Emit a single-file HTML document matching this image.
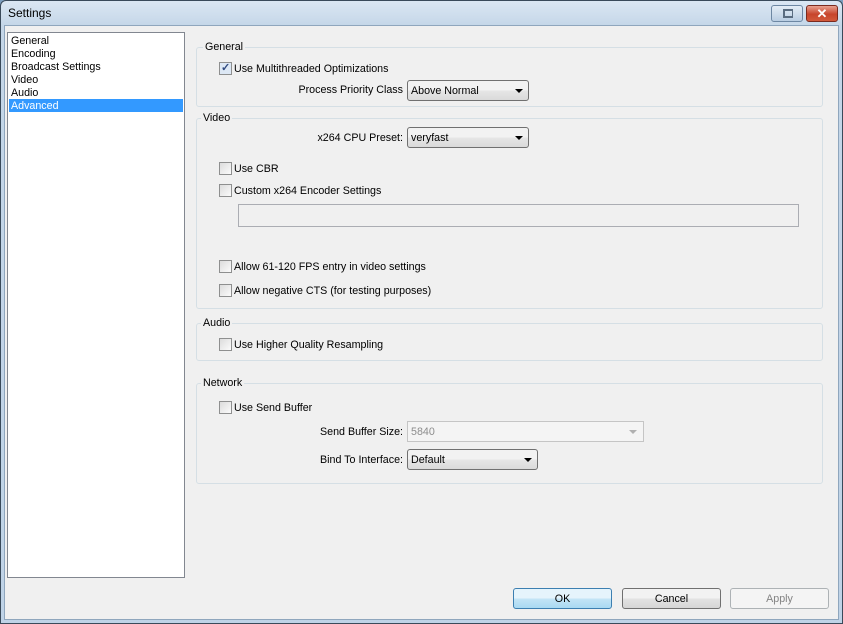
<!DOCTYPE html>
<html><head><style>
*{margin:0;padding:0;box-sizing:border-box}
body{width:843px;height:624px;overflow:hidden;background:#7d9fc0;font-family:"Liberation Sans",sans-serif;font-size:10.7px;color:#000;position:relative}
.a{position:absolute}
#frame{left:0;top:0;width:843px;height:624px;background:linear-gradient(#dbe7f3,#c4d6e8 25px,#bfd3e7);border:1px solid #3a4a5a;border-radius:6px 6px 0 0}
#client{left:4px;top:25px;width:835px;height:595px;background:#f0f0f0;border:1px solid #8fa6bd}
.title{left:8px;top:6px;font-size:12px}
.grp{position:absolute;border:1px solid #d5dfe5;border-radius:3px}
.lbl{position:absolute;background:#f0f0f0;padding:0 2px}
.cb{position:absolute;width:13px;height:13px;border:1px solid #8e8f8f;background:linear-gradient(135deg,#dcdcdc,#fbfbfb)}
.combo{position:absolute;height:21px;border:1px solid #707070;border-radius:3px;background:linear-gradient(#f2f2f2 50%,#e6e6e6 50%,#dadada);padding:0 3px;line-height:20px}
.combo:after{content:"";position:absolute;right:5px;top:8px;border-left:4px solid transparent;border-right:4px solid transparent;border-top:4px solid #000}
.btn{position:absolute;height:21px;border:1px solid #707070;border-radius:3px;background:linear-gradient(#f2f2f2 50%,#e3e3e3 50%,#d6d6d6);text-align:center;line-height:21px}
.r{position:absolute;text-align:right;width:200px}
</style></head><body>
<div id="frame" class="a"></div>
<div class="a title">Settings</div>
<div class="a" style="left:771px;top:5px;width:32px;height:17px;border:1px solid #6d87a3;border-radius:3px;background:linear-gradient(#e4edf6,#b9cde2)"><div class="a" style="left:11px;top:3px;width:10px;height:9px;border:2px solid #5a6c80;border-right-width:1px"></div></div>
<div class="a" style="left:806px;top:5px;width:32px;height:17px;border:1px solid #7a2a1e;border-radius:3px;background:linear-gradient(#e8a08f,#c7452c 55%,#d25a3b);color:#fff;font-weight:bold;text-align:center;line-height:15px;font-size:13px">✕</div>
<div id="client" class="a"></div>
<div class="a" style="left:7px;top:32px;width:178px;height:546px;background:#fff;border:1px solid #828790"></div>
<div class="a" style="left:11px;top:35px;line-height:13px">General<br>Encoding<br>Broadcast Settings<br>Video<br>Audio</div>
<div class="a" style="left:9px;top:99px;width:174px;height:13px;background:#3399ff;color:#fff;padding-left:2px;line-height:14px">Advanced</div>

<div class="grp" style="left:196px;top:47px;width:627px;height:60px"></div>
<div class="lbl" style="left:203px;top:41px">General</div>
<div class="cb" style="left:219px;top:62px;background:#dde8f5"><span class="a" style="left:1px;top:-2px;color:#304a80;font-size:11px;font-weight:bold">✓</span></div>
<div class="a" style="left:234px;top:63px">Use Multithreaded Optimizations</div>
<div class="r" style="left:203px;top:84px">Process Priority Class</div>
<div class="combo" style="left:407px;top:80px;width:122px">Above Normal</div>

<div class="grp" style="left:196px;top:118px;width:627px;height:191px"></div>
<div class="lbl" style="left:201px;top:112px">Video</div>
<div class="r" style="left:203px;top:132px">x264 CPU Preset:</div>
<div class="combo" style="left:407px;top:127px;width:122px">veryfast</div>
<div class="cb" style="left:219px;top:162px"></div><div class="a" style="left:234px;top:163px">Use CBR</div>
<div class="cb" style="left:219px;top:184px"></div><div class="a" style="left:234px;top:185px">Custom x264 Encoder Settings</div>
<div class="a" style="left:238px;top:204px;width:561px;height:23px;border:1px solid #abadb3;background:#f0f0f0"></div>
<div class="cb" style="left:219px;top:260px"></div><div class="a" style="left:234px;top:261px">Allow 61-120 FPS entry in video settings</div>
<div class="cb" style="left:219px;top:284px"></div><div class="a" style="left:234px;top:285px">Allow negative CTS (for testing purposes)</div>

<div class="grp" style="left:196px;top:323px;width:627px;height:38px"></div>
<div class="lbl" style="left:201px;top:317px">Audio</div>
<div class="cb" style="left:219px;top:338px"></div><div class="a" style="left:234px;top:339px">Use Higher Quality Resampling</div>

<div class="grp" style="left:196px;top:383px;width:627px;height:101px"></div>
<div class="lbl" style="left:201px;top:377px">Network</div>
<div class="cb" style="left:219px;top:401px"></div><div class="a" style="left:234px;top:402px">Use Send Buffer</div>
<div class="r" style="left:203px;top:426px">Send Buffer Size:</div>
<div class="a" style="left:407px;top:421px;width:237px;height:21px;border:1px solid #c5c5c5;background:#f4f4f4;color:#8d8d8d;padding:0 3px;line-height:20px"><span>5840</span><span class="a" style="right:6px;top:8px;border-left:4px solid transparent;border-right:4px solid transparent;border-top:4px solid #b0b0b0"></span></div>
<div class="r" style="left:203px;top:454px">Bind To Interface:</div>
<div class="combo" style="left:407px;top:449px;width:131px">Default</div>

<div class="btn" style="left:513px;top:588px;width:99px;border-color:#3c7fb1;background:linear-gradient(#e5f4fc 50%,#c4e5f6 50%,#a9d9f2)">OK</div>
<div class="btn" style="left:622px;top:588px;width:99px">Cancel</div>
<div class="btn" style="left:730px;top:588px;width:99px;border-color:#adb2b5;background:#f4f4f4;color:#838383">Apply</div>
</body></html>
